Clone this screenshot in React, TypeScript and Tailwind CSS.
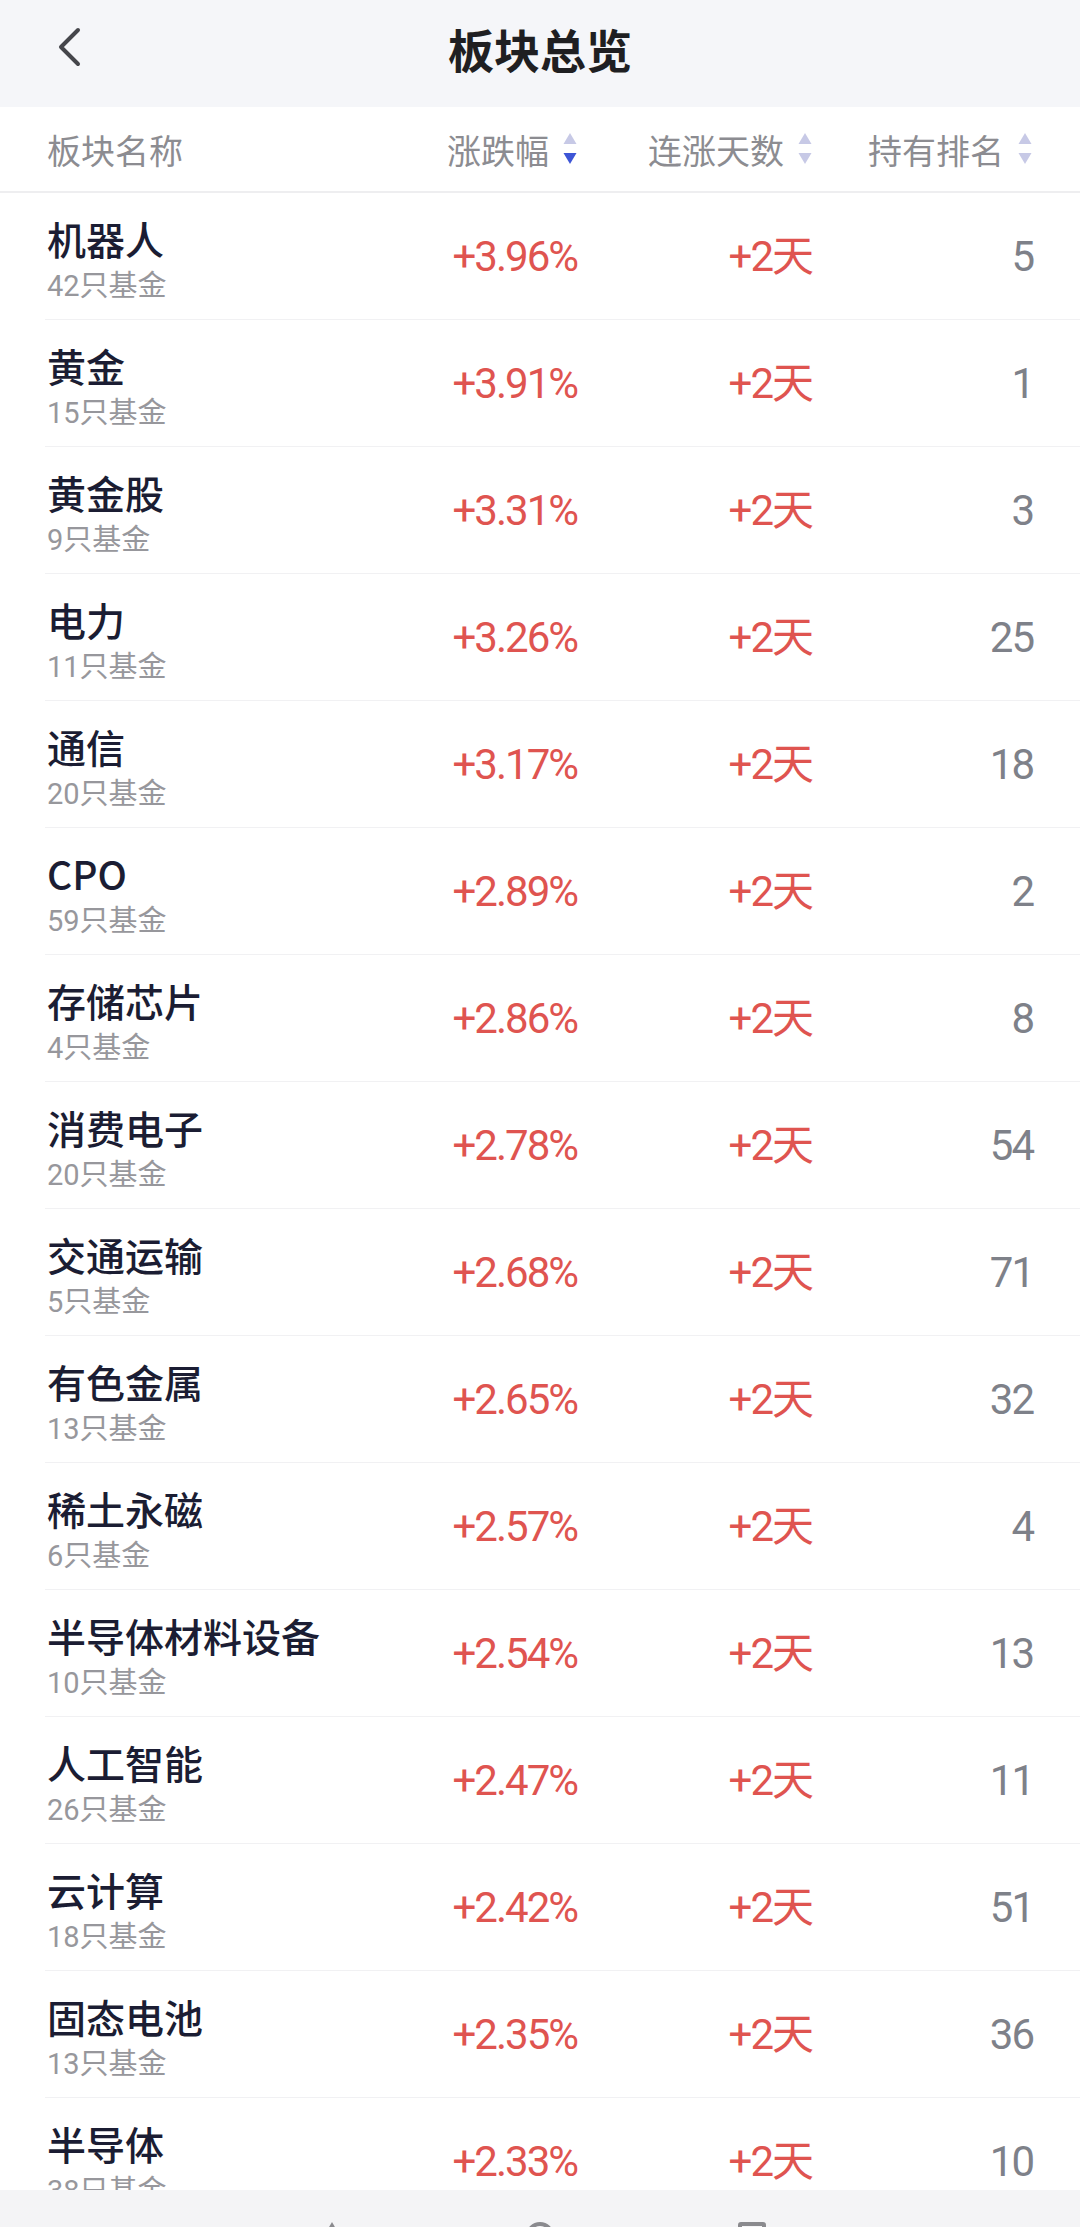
import React from 'react';

const rows = [
  { name: '机器人', count: 42, pct: '+3.96%', rank: 5 },
  { name: '黄金', count: 15, pct: '+3.91%', rank: 1 },
  { name: '黄金股', count: 9, pct: '+3.31%', rank: 3 },
  { name: '电力', count: 11, pct: '+3.26%', rank: 25 },
  { name: '通信', count: 20, pct: '+3.17%', rank: 18 },
  { name: 'CPO', count: 59, pct: '+2.89%', rank: 2 },
  { name: '存储芯片', count: 4, pct: '+2.86%', rank: 8 },
  { name: '消费电子', count: 20, pct: '+2.78%', rank: 54 },
  { name: '交通运输', count: 5, pct: '+2.68%', rank: 71 },
  { name: '有色金属', count: 13, pct: '+2.65%', rank: 32 },
  { name: '稀土永磁', count: 6, pct: '+2.57%', rank: 4 },
  { name: '半导体材料设备', count: 10, pct: '+2.54%', rank: 13 },
  { name: '人工智能', count: 26, pct: '+2.47%', rank: 11 },
  { name: '云计算', count: 18, pct: '+2.42%', rank: 51 },
  { name: '固态电池', count: 13, pct: '+2.35%', rank: 36 },
  { name: '半导体', count: 38, pct: '+2.33%', rank: 10 },
];

const SortIcon = ({ active }: { active?: boolean }) => (
  <svg width="14" height="32" viewBox="0 0 14 32" className="shrink-0">
    <path d="M7 0 L13.5 11 L0.5 11 Z" fill="#c7c9e6" />
    <path d="M0.5 20 L13.5 20 L7 31 Z" fill={active ? '#3d55d6' : '#c7c9e6'} />
  </svg>
);

const grid = 'grid grid-cols-[1fr_160px_235px_221px] pr-[47px]';

export default function App() {
  return (
    <div className="min-h-screen bg-white font-['Noto_Sans_CJK_SC',sans-serif]">
      {/* top bar */}
      <div className="relative flex h-[107px] items-center justify-center bg-[#f5f6f9] pb-[12px]">
        <button className="absolute left-[52px] top-[22px] p-1">
          <svg width="26" height="42" viewBox="0 0 26 42" fill="none">
            <path d="M22 4 L5 21 L22 38" stroke="#45464b" strokeWidth="4" strokeLinecap="round" strokeLinejoin="round" />
          </svg>
        </button>
        <h1 className="text-[46px] font-bold leading-none text-[#1f1f22]">板块总览</h1>
      </div>

      {/* column header */}
      <div className={`${grid} h-[86px] items-center border-b-2 border-[#eeeef0] text-[34px] text-[#8c8c91]`}>
        <div className="pl-[47px]">板块名称</div>
        <div className="flex items-center justify-end gap-[14px]">
          <span>涨跌幅</span>
          <SortIcon active />
        </div>
        <div className="flex items-center justify-end gap-[14px]">
          <span>连涨天数</span>
          <SortIcon />
        </div>
        <div className="flex items-center justify-end gap-[14px] pr-[1px]">
          <span>持有排名</span>
          <SortIcon />
        </div>
      </div>

      {/* list */}
      <div>
        {rows.map((r) => (
          <div key={r.name} className="ml-[45px] border-b border-[#f1f1f3]">
            <div className={`${grid} h-[126px] items-center -ml-[45px]`}>
              <div className="flex flex-col pl-[47px] pt-[6px]">
                <span className="text-[39px] font-medium leading-[46px] text-[#1b1d33]">{r.name}</span>
                <span className="mt-[8px] font-['Roboto','Noto_Sans_CJK_SC',sans-serif] text-[29px] leading-[34px] text-[#97979c]">
                  {r.count}只基金
                </span>
              </div>
              <div className="text-right font-['Roboto','Noto_Sans_CJK_SC',sans-serif] text-[42px] tracking-[-2px] text-[#df5450]">
                {r.pct}
              </div>
              <div className="text-right font-['Roboto','Noto_Sans_CJK_SC',sans-serif] text-[42px] tracking-[-2px] text-[#df5450]">
                +2天
              </div>
              <div className="text-right font-['Roboto',sans-serif] text-[42px] tracking-[-2px] text-[#7e8189]">
                {r.rank}
              </div>
            </div>
          </div>
        ))}
      </div>

      {/* system nav bar */}
      <div className="fixed bottom-0 left-0 right-0 h-[37px] overflow-hidden bg-[#f4f4f6]">
        <div className="absolute left-[318px] top-[32px] h-0 w-0 border-x-[14px] border-b-[24px] border-x-transparent border-b-[#8a8a8e]" />
        <div className="absolute left-[526px] top-[32px] h-[28px] w-[28px] rounded-full border-[4px] border-[#8a8a8e]" />
        <div className="absolute left-[738px] top-[32px] h-[28px] w-[28px] rounded-[3px] border-[4px] border-[#8a8a8e]" />
      </div>
    </div>
  );
}
